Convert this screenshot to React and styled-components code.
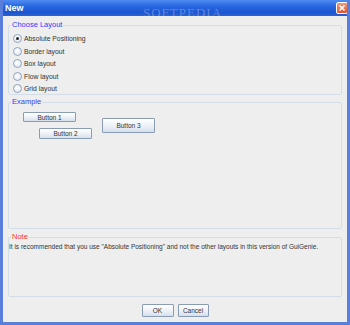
import React, { useState } from "react";
import styled, { createGlobalStyle } from "styled-components";

const GlobalStyle = createGlobalStyle`
  html, body {
    margin: 0;
    padding: 0;
    background: #eeeeee;
  }
  body {
    font-family: "Liberation Sans", Arial, sans-serif;
  }
`;

const Window = styled.div`
  position: relative;
  width: 350px;
  height: 325px;
  box-sizing: border-box;
  display: flex;
  flex-direction: column;
  background: #eeeeee;
  border-left: 3px solid #5a7edc;
  border-right: 3px solid #5a7edc;
  border-bottom: 3px solid #5a7edc;
  overflow: hidden;
`;

const TitleBar = styled.div`
  height: 16px;
  margin: 0 -3px;
  flex: none;
  display: flex;
  align-items: center;
  justify-content: space-between;
  padding: 0 2px 0 5px;
  background: linear-gradient(#4f8cf2 0%, #2766e0 40%, #1c55d0 80%, #2a63d6 100%);
  color: #fff;
  font-size: 9px;
  font-weight: bold;
`;

const CloseBox = styled.div`
  width: 10px;
  height: 10px;
  border-radius: 2px;
  border: 1px solid #fff;
  background: linear-gradient(#f09a7a, #e0552f);
  display: flex;
  align-items: center;
  justify-content: center;
`;

const Watermark = styled.div`
  position: absolute;
  top: 5px;
  left: 140px;
  font-family: "Liberation Serif", serif;
  font-size: 13px;
  letter-spacing: 1px;
  color: rgba(255, 255, 255, 0.28);
  pointer-events: none;
`;

const Body = styled.div`
  flex: 1;
  display: flex;
  flex-direction: column;
  padding: 5px 5px 0 5px;
`;

const Group = styled.fieldset`
  margin: ${(p) => p.$mt || 0}px 0 0 0;
  padding: 0 4px 4px 4px;
  border: 1px solid #d3dde8;
  border-radius: 2px;
  flex: ${(p) => p.$flex || "none"};
  height: ${(p) => p.$height || "auto"};
  box-sizing: border-box;
  min-width: 0;
`;

const Legend = styled.legend`
  padding: 0 1px;
  margin-left: -2px;
  font-size: 7.5px;
  line-height: 8px;
  color: ${(p) => p.$color || "#3838ff"};
`;

const RadioList = styled.div`
  display: flex;
  flex-direction: column;
  gap: 3.6px;
  padding-top: 5px;
`;

const RadioRow = styled.label`
  display: flex;
  align-items: center;
  gap: 2px;
  height: 9px;
  font-size: 6.8px;
  color: #333;
  cursor: pointer;
`;

const RadioDot = styled.span`
  width: 7px;
  height: 7px;
  border-radius: 50%;
  border: 1px solid #8fa3bd;
  background: radial-gradient(circle at 40% 35%, #ffffff, #dde4ee);
  display: flex;
  align-items: center;
  justify-content: center;
  flex: none;
  &::after {
    content: "";
    width: 3px;
    height: 3px;
    border-radius: 50%;
    background: ${(p) => (p.$on ? "#222" : "transparent")};
  }
`;

const Canvas = styled.div`
  position: relative;
  flex: 1;
`;

const SwingButton = styled.button`
  font-family: "Liberation Sans", Arial, sans-serif;
  font-size: 6.5px;
  color: #333;
  border: 1px solid #8a9cb3;
  border-radius: 1px;
  background: linear-gradient(#ffffff 0%, #eef2f7 50%, #d6e0ec 100%);
  padding: 0;
  width: ${(p) => p.$w}px;
  height: ${(p) => p.$h}px;
  box-sizing: border-box;
  cursor: pointer;
`;

const Placed = styled(SwingButton)`
  position: absolute;
  left: ${(p) => p.$x}px;
  top: ${(p) => p.$y}px;
`;

const NoteText = styled.div`
  font-size: 6.5px;
  color: #333;
  padding-top: 2px;
  margin-left: -4px;
  white-space: nowrap;
`;

const Footer = styled.div`
  display: flex;
  justify-content: center;
  gap: 4px;
  padding: 7px 0 5px 0;
`;

const layouts = [
  "Absolute Positioning",
  "Border layout",
  "Box layout",
  "Flow layout",
  "Grid layout",
];

export default function App() {
  const [choice, setChoice] = useState(0);

  return (
    <>
      <GlobalStyle />
      <Window>
        <TitleBar>
          <span>New</span>
          <CloseBox>
            <svg width="8" height="8" viewBox="0 0 8 8">
              <path d="M1.5 1.5 L6.5 6.5 M6.5 1.5 L1.5 6.5" stroke="#fff" strokeWidth="1.6" />
            </svg>
          </CloseBox>
        </TitleBar>
        <Watermark>SOFTPEDIA</Watermark>
        <Body>
          <Group $height="74px">
            <Legend>Choose Layout</Legend>
            <RadioList>
              {layouts.map((name, i) => (
                <RadioRow key={name} onClick={() => setChoice(i)}>
                  <RadioDot $on={choice === i} />
                  {name}
                </RadioRow>
              ))}
            </RadioList>
          </Group>

          <Group $mt={3} $height="131px">
            <Legend>Example</Legend>
            <Canvas>
              <Placed $x={10} $y={6} $w={53} $h={10}>Button 1</Placed>
              <Placed $x={26} $y={22} $w={53} $h={11}>Button 2</Placed>
              <Placed $x={89} $y={12} $w={53} $h={15}>Button 3</Placed>
            </Canvas>
          </Group>

          <Group $mt={4} $flex="1">
            <Legend $color="#ff3333">Note</Legend>
            <NoteText>
              It is recommended that you use "Absolute Positioning" and not the other layouts in this version of GuiGenie.
            </NoteText>
          </Group>

          <Footer>
            <SwingButton $w={32} $h={13}>OK</SwingButton>
            <SwingButton $w={31} $h={13}>Cancel</SwingButton>
          </Footer>
        </Body>
      </Window>
    </>
  );
}
